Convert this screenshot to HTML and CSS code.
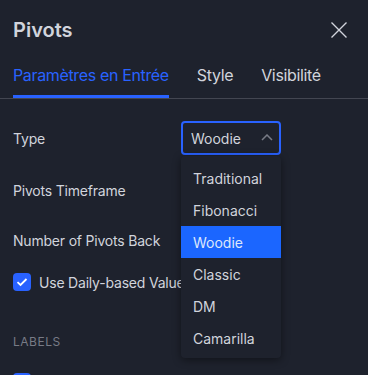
FILE: index.html
```html
<!DOCTYPE html>
<html>
<head>
    <meta charset="UTF-8">
    <title>Pivots</title>
    <link rel="stylesheet" href="styles.css">
</head>
<body>
    <div class="dialog">
        <div class="header">
            <h1>Pivots</h1>
            <button class="close-btn" aria-label="Fermer">
                <svg width="18" height="18" viewBox="0 0 18 18">
                    <path d="M1.5 1.5l15 15M16.5 1.5l-15 15" stroke="#d1d4dc" stroke-width="1.4" fill="none"/>
                </svg>
            </button>
        </div>

        <div class="tabs">
            <div class="tab active">Paramètres en Entrée</div>
            <div class="tab">Style</div>
            <div class="tab">Visibilité</div>
        </div>

        <div class="content">
            <div class="row row-type">
                <label>Type</label>
                <div class="select-wrap">
                    <div class="select open">
                        <span>Woodie</span>
                        <svg class="chevron" width="12" height="7" viewBox="0 0 12 7">
                            <path d="M1 6l5-5 5 5" stroke="#787b86" stroke-width="1.5" fill="none"/>
                        </svg>
                    </div>
                    <div class="menu">
                        <div class="menu-item">Traditional</div>
                        <div class="menu-item">Fibonacci</div>
                        <div class="menu-item selected">Woodie</div>
                        <div class="menu-item">Classic</div>
                        <div class="menu-item">DM</div>
                        <div class="menu-item">Camarilla</div>
                    </div>
                </div>
            </div>

            <div class="row">
                <label>Pivots Timeframe</label>
            </div>

            <div class="row row-last">
                <label>Number of Pivots Back</label>
            </div>

            <div class="row check-row">
                <span class="checkbox">
                    <svg width="12" height="10" viewBox="0 0 12 10">
                        <path d="M1.5 5.2l3 2.8 6-6" stroke="#fff" stroke-width="1.8" fill="none"/>
                    </svg>
                </span>
                <label>Use Daily-based Values</label>
            </div>

            <div class="section-title">LABELS</div>

            <div class="row check-row">
                <span class="checkbox">
                    <svg width="12" height="10" viewBox="0 0 12 10">
                        <path d="M1.5 5.2l3 2.8 6-6" stroke="#fff" stroke-width="1.8" fill="none"/>
                    </svg>
                </span>
            </div>
        </div>
    </div>
</body>
</html>
```

FILE: styles.css
```css
* {
    margin: 0;
    padding: 0;
    box-sizing: border-box;
    font-family: Inter, 'Noto Sans', sans-serif;
}

body {
    background: #1e222d;
    color: #d1d4dc;
    overflow: hidden;
}

.dialog {
    width: 368px;
}

.header {
    display: flex;
    justify-content: space-between;
    align-items: center;
    height: 60px;
    padding: 0 20px 0 13px;
}

h1 {
    font-size: 20px;
    font-weight: 600;
    color: #d1d4dc;
}

.close-btn {
    background: none;
    border: none;
    width: 18px;
    height: 18px;
    display: flex;
}

.tabs {
    display: flex;
    gap: 28px;
    padding: 0 13px;
    border-bottom: 1px solid #434651;
    height: 39px;
}

.tab {
    font-size: 16px;
    letter-spacing: -0.35px;
    color: #d1d4dc;
    padding-top: 5px;
    border-bottom: 3px solid transparent;
}

.tab.active {
    color: #2962ff;
    border-bottom-color: #2962ff;
}

.content {
    padding: 22px 13px 0;
}

.row {
    display: flex;
    justify-content: space-between;
    align-items: center;
    height: 34px;
    margin-bottom: 16px;
    font-size: 14px;
}

.row-type {
    margin-bottom: 18px;
}

.row-last {
    margin-bottom: 8px;
}

.row label {
    font-size: 14px;
    letter-spacing: -0.2px;
    color: #d1d4dc;
}

.select-wrap {
    position: relative;
    width: 100px;
    margin-right: 74px;
}

.select {
    display: flex;
    justify-content: space-between;
    align-items: center;
    height: 34px;
    padding: 0 6px 0 8px;
    border: 2px solid #2962ff;
    border-radius: 4px;
    font-size: 14px;
}

.chevron {
    margin-top: -2px;
}

.menu {
    position: absolute;
    top: 35px;
    left: 0;
    width: 100px;
    padding: 6px 0 4px;
    background: #1e222d;
    border-radius: 4px;
    box-shadow: 0 2px 8px rgba(0,0,0,0.45);
    z-index: 10;
}

.menu-item {
    height: 32px;
    line-height: 33px;
    padding-left: 12px;
    font-size: 14px;
    color: #d1d4dc;
}

.menu-item.selected {
    background: #1b66ff;
    color: #dde6fb;
}

.check-row {
    justify-content: flex-start;
    margin-bottom: 0;
}

.checkbox {
    width: 18px;
    height: 18px;
    border-radius: 4px;
    background: #2962ff;
    display: flex;
    align-items: center;
    justify-content: center;
    margin-right: 8px;
}

.section-title {
    font-size: 12px;
    color: #787b86;
    letter-spacing: 0.5px;
    margin-top: 35px;
    margin-bottom: 16px;
}
```
